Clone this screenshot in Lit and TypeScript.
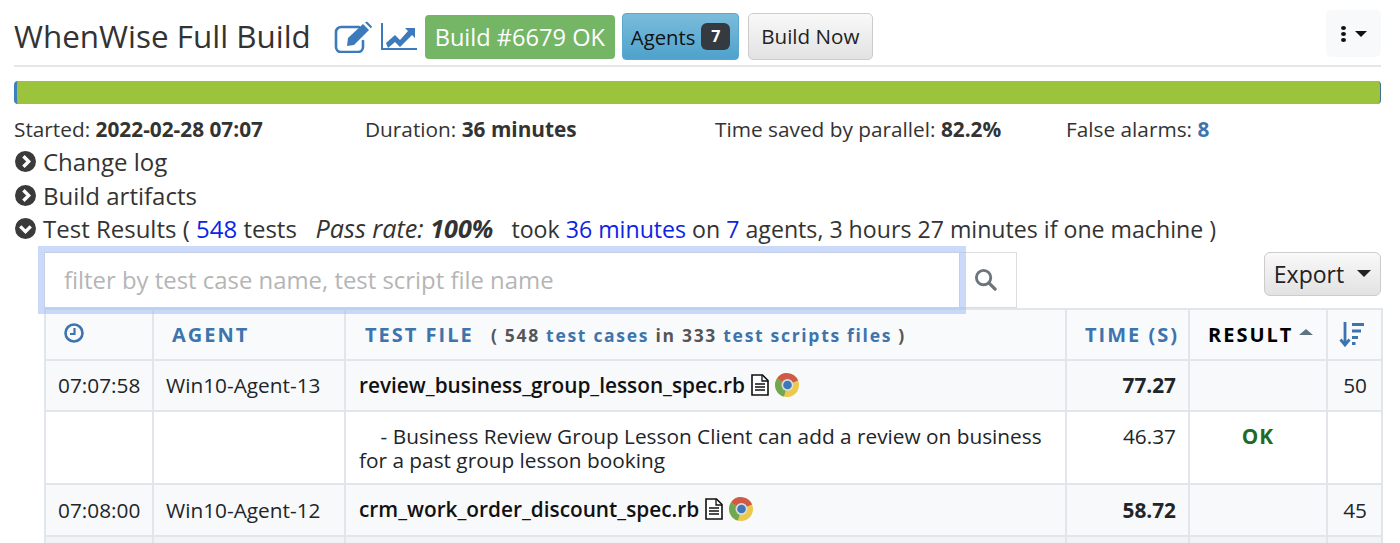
import { LitElement, html, css, svg } from "lit";
import { customElement } from "lit/decorators.js";

const chevron = (down: boolean) => html`<svg class="chev" viewBox="0 0 20 20">
  <circle cx="10" cy="10" r="10" fill="#3a3a3a"></circle>
  ${down
    ? svg`<path d="M5 8l5 5 5-5" fill="none" stroke="#fff" stroke-width="3.2"></path>`
    : svg`<path d="M8 5l5 5-5 5" fill="none" stroke="#fff" stroke-width="3.2"></path>`}
</svg>`;

const doc = html`<svg class="doc" viewBox="0 0 18 22">
  <path d="M1 1h10.500L17 6.500V21H1z" fill="#fff" stroke="#111" stroke-width="1.6"></path>
  <path d="M11 1v6h6M4 10h10M4 13h10M4 16h10" fill="none" stroke="#111" stroke-width="1.300"></path>
</svg>`;

const chrome = html`<svg class="chrome" viewBox="0 0 24 24">
  <circle cx="12" cy="12" r="12" fill="#ecc94a"></circle>
  <path d="M12 12L2 5.400A12 12 0 0 1 23 7.500z" fill="#cf5a48"></path>
  <path d="M12 12L2 5.400A12 12 0 0 0 9 23.600z" fill="#6fa850"></path>
  <circle cx="12.500" cy="12" r="6" fill="#dcdcdc"></circle>
  <circle cx="12.500" cy="12" r="4.300" fill="#3f78b8"></circle>
</svg>`;

@customElement("app-root")
export class AppRoot extends LitElement {
  static styles = css`
    :host {
      display: block;
      height: 543px;
      overflow: hidden;
      background: #fff;
      font-family: "Open Sans", sans-serif;
      color: #212529;
      font-size: 20px;
    }
    .page { padding: 0 19px 0 14px; }
    .head {
      display: flex;
      align-items: center;
      height: 67px;
      padding-top: 8px;
      box-sizing: border-box;
      border-bottom: 2px solid #e6e6e6;
      position: relative;
    }
    h1 {
      margin: 0 23px 0 0;
      font-size: 31.400px;
      font-weight: 400;
      color: #333;
      white-space: nowrap;
      position: relative;
      top: -1px;
    }
    .ico { width: 39px; height: 32px; display: block; margin-right: 8px; }
    .ico2 { width: 36px; height: 27px; display: block; margin-right: 8px; }
    .ok {
      background: #74b566;
      color: #fff;
      border-radius: 4px;
      height: 44px;
      line-height: 44px;
      width: 190px;
      text-align: center;
      font-size: 23.600px;
      margin-right: 7px;
      white-space: nowrap;
    }
    .agents {
      box-sizing: border-box;
      width: 117px;
      height: 47px;
      background: linear-gradient(#7bbcdb, #4ea2cc);
      border: 1px solid #5aa8ce;
      border-radius: 4px;
      display: flex;
      align-items: center;
      padding-left: 8px;
      color: #111;
      margin-right: 9px;
      font-size: 20.300px;
    }
    .badge {
      background: #343a40;
      color: #fff;
      font-size: 16px;
      font-weight: 700;
      border-radius: 6px;
      width: 29px;
      height: 27px;
      line-height: 27px;
      text-align: center;
      margin-left: 6px;
    }
    .now {
      box-sizing: border-box;
      width: 125px;
      height: 47px;
      background: linear-gradient(#f9f9f9, #e2e2e2);
      border: 1px solid #ccc;
      border-radius: 5px;
      text-align: center;
      line-height: 45px;
      font-size: 20.600px;
      color: #222;
    }
    .more {
      margin-left: auto;
      width: 55px;
      height: 47px;
      background: #f8f9fa;
      border-radius: 5px;
      display: flex;
      align-items: center;
      justify-content: center;
      gap: 9px;
      position: relative;
      top: -3px;
    }
    .dots { display: flex; flex-direction: column; gap: 2px; }
    .dots i { width: 5px; height: 4px; border-radius: 50%; background: #111; display: block; }
    .caret { width: 0; height: 0; border: 6px solid transparent; border-top: 6px solid #111; border-bottom: 0; }
    .bar {
      margin-top: 14px;
      height: 23px;
      background: #9bc33b;
      border-radius: 4px;
      border-left: 3px solid #3d7fc1;
      border-right: 1px solid #3d6e9e;
      box-sizing: border-box;
    }
    .info {
      display: grid;
      grid-template-columns: 351px 350px 351px 1fr;
      font-size: 20.800px;
      height: 25px;
      line-height: 26px;
      margin-top: 12px;
      color: #333;
    }
    .info b { color: #333; }
    .info a { color: #3d74ae; font-weight: 700; }
    .line {
      display: flex;
      align-items: center;
      gap: 7px;
      height: 33.500px;
      font-size: 24px;
      color: #333;
      white-space: nowrap;
    }
    .line.first { margin-top: 4px; }
    .chev { width: 21px; height: 21px; margin-left: 1px; flex: none; }
    .line a { color: #0b24e6; }
    .res { white-space: pre; position: relative; top: -1px; }
    .res i { font-size: 25.200px; }
    .res .rest { font-size: 23.150px; }
    .tools {
      display: flex;
      align-items: flex-start;
      margin-top: 6px;
      padding-left: 30px;
      height: 56px;
    }
    .inp {
      box-sizing: border-box;
      width: 916px;
      height: 56px;
      background: #fff;
      border: 1px solid #c5d0e6;
      box-shadow: 0 0 0 6px rgba(160, 188, 242, 0.55);
      color: #b5b5b5;
      font-size: 23.900px;
      line-height: 54px;
      padding-left: 19px;
      position: relative;
      z-index: 1;
    }
    .sbtn {
      box-sizing: border-box;
      width: 57px;
      height: 56px;
      border: 1px solid #ddd;
      border-left: 0;
      display: flex;
      align-items: center;
      justify-content: center;
    }
    .sbtn svg { width: 23px; height: 23px; margin-right: 5px; }
    .export {
      box-sizing: border-box;
      margin-left: auto;
      width: 117px;
      height: 44px;
      background: linear-gradient(#f9f9f9, #e2e2e2);
      border: 1px solid #ccc;
      border-radius: 6px;
      display: flex;
      align-items: center;
      justify-content: center;
      gap: 13px;
      font-size: 23px;
      color: #222;
    }
    .export .caret { border-width: 7px; border-top-width: 7px; border-bottom-width: 0; border-top-color: #222; }
    table {
      margin-left: 30px;
      width: 1337px;
      table-layout: fixed;
      border-collapse: collapse;
      font-size: 20.800px;
      color: #212529;
    }
    th, td {
      border: 2px solid #e2e6ea;
      padding: 0 12px;
      vertical-align: middle;
      line-height: 24px;
    }
    th {
      background: #f9fafc;
      height: 51px;
      color: #3d74ae;
      font-size: 20px;
      font-weight: 700;
      letter-spacing: 2px;
      text-align: left;
      padding-top: 2px;
      box-sizing: border-box;
    }
    th.sub { white-space: nowrap; }
    th small { font-size: 17.500px; letter-spacing: 1.700px; margin-left: 10px; color: #3d74ae; }
    th small em { font-style: normal; color: #555; }
    th.act { color: #000; white-space: nowrap; }
    th.r { white-space: nowrap; padding: 2px 4px 0; text-align: center; }
    th.r.act { padding-left: 18px; text-align: left; }
    th.time { padding: 2px 9px 0 0; text-align: right; }
    .up { display: inline-block; width: 0; height: 0; border: 7px solid transparent; border-bottom: 6px solid #5f7480; border-top: 0; vertical-align: 7px; margin-left: 6px; }
    .sort { display: block; margin: 0 auto; position: relative; left: -3px; top: -1px; }
    .clock { display: block; margin: 0 0 4px 6px; }
    tr.s td { background: #f8f9fa; }
    tr.s { height: 51px; }
    tr.s.last { height: 52px; }
    tr.c td { height: 73px; vertical-align: top; padding-top: 12px; padding-bottom: 0; box-sizing: border-box; }
    td.pad { padding-left: 13px; }
    td.end { padding-right: 14px; }
    .num { text-align: right; }
    .file { display: flex; align-items: center; font-weight: 600; color: #111; }
    .last .file { position: relative; top: -1px; }
    .doc { width: 18px; height: 22px; margin-left: 6px; flex: none; }
    .chrome { width: 24px; height: 24px; margin-left: 6px; flex: none; }
    .pass { color: #1f6a24; font-weight: 700; text-align: center; letter-spacing: 1px; }
    .desc { white-space: pre-wrap; }
    b.t { font-weight: 700; }
    tr.e td { background: #f2f3f5; height: 20px; }
  `;

  render() {
    return html`<div class="page">
      <div class="head">
        <h1>WhenWise Full Build</h1>
        <svg class="ico" viewBox="0 0 39 32">
          <path d="M25 6H7a5 5 0 0 0-5 5v15a5 5 0 0 0 5 5h17a5 5 0 0 0 5-5v-6" fill="none" stroke="#3d7abb" stroke-width="2.600" stroke-linecap="round"></path>
          <path d="M14 17L29 3l6 6-15 15-7 1z" fill="#3d7abb"></path>
          <path d="M31 1.500l2-1 5 5-1 2z" fill="#3d7abb"></path>
        </svg>
        <svg class="ico2" viewBox="0 0 36 27">
          <path d="M1 0v26h35" fill="none" stroke="#3d7abb" stroke-width="2"></path>
          <path d="M5 20l9-8 5 5 8-9-3-3h10v10l-3-3-12 12-5-5-7 6z" fill="#3d7abb"></path>
        </svg>
        <span class="ok">Build #6679 OK</span>
        <span class="agents">Agents<span class="badge">7</span></span>
        <span class="now">Build Now</span>
        <span class="more"><span class="dots"><i></i><i></i><i></i></span><span class="caret"></span></span>
      </div>
      <div class="bar"></div>
      <div class="info">
        <span>Started: <b>2022-02-28 07:07</b></span>
        <span>Duration: <b>36 minutes</b></span>
        <span>Time saved by parallel: <b>82.2%</b></span>
        <span>False alarms: <a>8</a></span>
      </div>
      <div class="line first">${chevron(false)}<span>Change log</span></div>
      <div class="line">${chevron(false)}<span>Build artifacts</span></div>
      <div class="line">${chevron(true)}<span class="res">Test Results ( <a>548</a> tests   <i>Pass rate: <b>100%</b></i><span class="rest">   took <a>36 minutes</a> on <a>7</a> agents, 3 hours 27 minutes if one machine )</span></span></div>
      <div class="tools">
        <div class="inp">filter by test case name, test script file name</div>
        <div class="sbtn"><svg viewBox="0 0 24 24"><circle cx="10" cy="10" r="7.500" fill="none" stroke="#6c757d" stroke-width="3"></circle><path d="M15.500 15.500L22 22" stroke="#6c757d" stroke-width="3.400" stroke-linecap="round"></path></svg></div>
        <div class="export">Export<span class="caret"></span></div>
      </div>
      <table>
        <colgroup><col style="width:108px"><col style="width:192px"><col style="width:721px"><col style="width:123px"><col style="width:138px"><col style="width:55px"></colgroup>
        <tr>
          <th><svg class="clock" width="20" height="20" viewBox="0 0 20 20"><circle cx="10" cy="10" r="8.500" fill="none" stroke="#3d74ae" stroke-width="2.600"></circle><path d="M10.500 5v6H6" fill="none" stroke="#3d74ae" stroke-width="2.200"></path></svg></th>
          <th class="sub" style="padding-left:18px">AGENT</th>
          <th class="sub" style="padding-left:19px">TEST FILE <small><em>( 548</em> test cases <em>in 333</em> test scripts files <em>)</em></small></th>
          <th class="r time">TIME (S)</th>
          <th class="act r">RESULT<span class="up"></span></th>
          <th class="r"><svg class="sort" width="26" height="26" viewBox="0 0 26 26"><path d="M6 1v23M1.500 18.500L6 24l4.500-5.500" fill="none" stroke="#3d74ae" stroke-width="2.800"></path><path d="M13 2h12v3H13zM13 8.500h9v3h-9zM13 15h6v3h-6zM13 21h3.500v3H13z" fill="#3d74ae"></path></svg></th>
        </tr>
        <tr class="s">
          <td>07:07:58</td><td>Win10-Agent-13</td>
          <td class="pad"><span class="file">review_business_group_lesson_spec.rb${doc}${chrome}</span></td>
          <td class="num"><b class="t">77.27</b></td><td></td><td class="num end">50</td>
        </tr>
        <tr class="c">
          <td></td><td></td>
          <td class="desc pad">    - Business Review Group Lesson Client can add a review on business for a past group lesson booking</td>
          <td class="num">46.37</td><td class="pass">OK</td><td></td>
        </tr>
        <tr class="s last">
          <td>07:08:00</td><td>Win10-Agent-12</td>
          <td class="pad"><span class="file">crm_work_order_discount_spec.rb${doc}${chrome}</span></td>
          <td class="num"><b class="t">58.72</b></td><td></td><td class="num end">45</td>
        </tr>
        <tr class="e"><td></td><td></td><td></td><td></td><td></td><td></td></tr>
      </table>
    </div>`;
  }
}
